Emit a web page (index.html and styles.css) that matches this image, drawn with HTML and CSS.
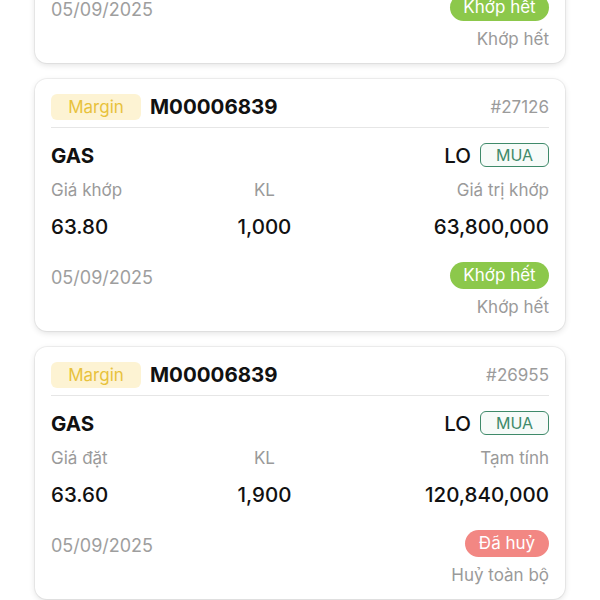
FILE: index.html
```html
<!DOCTYPE html>
<html lang="vi">
<head>
<meta charset="utf-8">
<link rel="stylesheet" href="styles.css">
</head>
<body>
<div class="list">
  <div class="card">
    <div class="head">
      <span class="tag">Margin</span>
      <span class="acc">M00006839</span>
      <span class="no">#27210</span>
    </div>
    <div class="sym-row">
      <span class="sym">GAS</span>
      <span class="type">LO <span class="side">MUA</span></span>
    </div>
    <div class="grid">
      <span class="lbl">Giá khớp</span><span class="lbl mid">KL</span><span class="lbl end">Giá trị khớp</span>
      <span class="val">63.80</span><span class="val mid">1,000</span><span class="val end">63,800,000</span>
    </div>
    <div class="foot">
      <span class="date">05/09/2025</span>
      <span class="status ok">Khớp hết</span>
    </div>
    <div class="note">Khớp hết</div>
  </div>

  <div class="card">
    <div class="head">
      <span class="tag">Margin</span>
      <span class="acc">M00006839</span>
      <span class="no">#27126</span>
    </div>
    <div class="sym-row">
      <span class="sym">GAS</span>
      <span class="type">LO <span class="side">MUA</span></span>
    </div>
    <div class="grid">
      <span class="lbl">Giá khớp</span><span class="lbl mid">KL</span><span class="lbl end">Giá trị khớp</span>
      <span class="val">63.80</span><span class="val mid">1,000</span><span class="val end">63,800,000</span>
    </div>
    <div class="foot">
      <span class="date">05/09/2025</span>
      <span class="status ok">Khớp hết</span>
    </div>
    <div class="note">Khớp hết</div>
  </div>

  <div class="card">
    <div class="head">
      <span class="tag">Margin</span>
      <span class="acc">M00006839</span>
      <span class="no">#26955</span>
    </div>
    <div class="sym-row">
      <span class="sym">GAS</span>
      <span class="type">LO <span class="side">MUA</span></span>
    </div>
    <div class="grid">
      <span class="lbl">Giá đặt</span><span class="lbl mid">KL</span><span class="lbl end">Tạm tính</span>
      <span class="val">63.60</span><span class="val mid">1,900</span><span class="val end">120,840,000</span>
    </div>
    <div class="foot">
      <span class="date">05/09/2025</span>
      <span class="status cancel">Đã huỷ</span>
    </div>
    <div class="note">Huỷ toàn bộ</div>
  </div>
</div>
</body>
</html>
```

FILE: styles.css
```css
* { box-sizing: border-box; }
html, body { margin: 0; padding: 0; background: #ffffff; }
body {
  font-family: Inter, "Noto Sans", "Liberation Sans", sans-serif;
  color: #111;
  width: 600px;
  height: 600px;
  overflow: hidden;
}
.list {
  margin-top: -189px;
  padding: 0 35px;
  display: flex;
  flex-direction: column;
  gap: 16px;
}
.card {
  height: 252px;
  background: #fff;
  border-radius: 12px;
  box-shadow: 0 0 0 1px rgba(0,0,0,0.05), 0 2px 6px rgba(0,0,0,0.12);
  padding: 15px 16px 0 16px;
}
.head {
  display: flex;
  align-items: center;
  height: 34px;
  padding-bottom: 8px;
  border-bottom: 1px solid #e6e6e6;
}
.tag {
  display: inline-flex;
  align-items: center;
  justify-content: center;
  width: 90px;
  height: 26px;
  background: #fdf3d3;
  color: #e8c23c;
  border-radius: 6px;
  font-size: 17px;
}
.acc {
  margin-left: 9px;
  font-weight: 700;
  font-size: 20.5px;
}
.no {
  margin-left: auto;
  color: #9b9b9b;
  font-size: 17px;
}
.sym-row {
  display: flex;
  align-items: center;
  justify-content: space-between;
  height: 50px;
  padding-top: 4px;
}
.sym { font-weight: 700; font-size: 20.5px; }
.type { font-size: 20.5px; font-weight: 500; display: inline-flex; align-items: center; }
.side {
  margin-left: 9px;
  display: inline-flex;
  align-items: center;
  justify-content: center;
  width: 69px;
  height: 24px;
  border: 1.5px solid #3f8a6a;
  border-radius: 6px;
  color: #3f8a6a;
  font-size: 16px;
  font-weight: 400;
  background: #f7fbf9;
}
.grid {
  display: grid;
  grid-template-columns: 2fr 2fr 3fr;
  grid-template-rows: 24px 48px;
  align-items: center;
}
.lbl { color: #9a9a9a; font-size: 17px; }
.val { font-size: 20.5px; font-weight: 500; color: #111; }
.mid { text-align: center; }
.end { text-align: right; }
.foot {
  display: flex;
  justify-content: space-between;
  align-items: center;
  margin-top: 10px;
  height: 30px;
}
.date { color: #9e9e9e; font-size: 18px; margin-top: 5px; }
.status {
  display: inline-flex;
  align-items: center;
  justify-content: center;
  height: 27px;
  border-radius: 14px;
  color: #fff;
  font-size: 17px;
}
.ok { background: #8cc84b; width: 99px; }
.cancel { background: #f28783; width: 84px; }
.note {
  text-align: right;
  color: #9a9a9a;
  font-size: 17px;
  margin-top: 7px;
}
```
